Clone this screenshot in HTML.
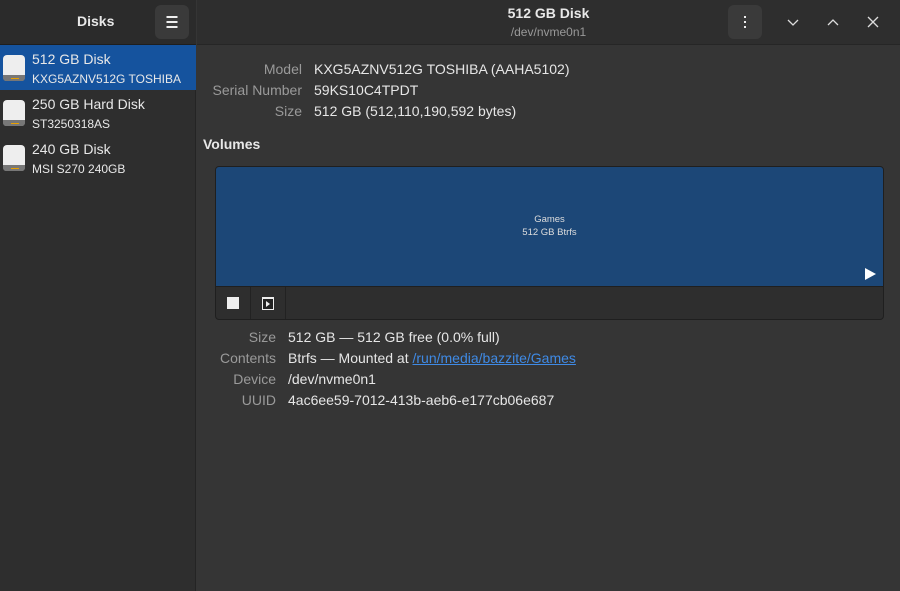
<!DOCTYPE html>
<html><head><style>
*{margin:0;padding:0;box-sizing:border-box}
body{width:900px;height:591px;overflow:hidden;background:#353535;font-family:"Liberation Sans","DejaVu Sans",sans-serif;color:#e8e8e8;position:relative}
.side{position:absolute;left:0;top:0;width:196px;height:591px;background:#2e2e2e;border-right:1px solid #242424}
.hdr{position:absolute;left:0;top:0;width:196px;height:45px;background:#2b2b2b;border-bottom:1px solid #1e1e1e}
.mhdr{position:absolute;left:197px;top:0;width:703px;height:45px;background:#2e2e2e;border-bottom:1px solid #262626}
.btn{position:absolute;width:34px;height:34px;border-radius:6px;background:#3a3a3a}
.item{position:absolute;left:0;width:196px;height:45px}
.item .t{position:absolute;left:32px;top:6px;font-size:14px}
.item .s{position:absolute;left:32px;top:27px;font-size:12px}
.ic{position:absolute;left:3px;top:10px;width:22px;height:26px;background:#eee;border-radius:4px}
.ic:after{content:"";position:absolute;left:0;bottom:0;width:22px;height:6px;background:#777;border-radius:0 0 3px 3px}
.ic:before{content:"";position:absolute;left:8px;bottom:2px;width:8px;height:1px;background:#e8a000;z-index:2}
.lbl{position:absolute;font-size:14px;color:#9a9a9a;text-align:right}
.val{position:absolute;font-size:14px;color:#e6e6e6}
</style></head><body>
<div class="side">
 <div class="item" style="top:45px;background:#15539e"><div class="ic"></div><div class="t">512 GB Disk</div><div class="s">KXG5AZNV512G TOSHIBA</div></div>
 <div class="item" style="top:90px"><div class="ic"></div><div class="t">250 GB Hard Disk</div><div class="s">ST3250318AS</div></div>
 <div class="item" style="top:135px"><div class="ic"></div><div class="t">240 GB Disk</div><div class="s">MSI S270 240GB</div></div>
</div>
<div class="hdr">
 <div style="position:absolute;left:77px;top:13px;font-weight:bold;font-size:14px">Disks</div>
 <div class="btn" style="left:155px;top:5px"><svg width="34" height="34"><path d="M11.5 12h11M11.5 17h11M11.5 22h11" stroke="#eee" stroke-width="2"/></svg></div>
</div>
<div class="mhdr">
 <div style="position:absolute;left:0;width:703px;top:5px;text-align:center;font-weight:bold;font-size:14px">512 GB Disk</div>
 <div style="position:absolute;left:0;width:703px;top:25px;text-align:center;font-size:12px;color:#999">/dev/nvme0n1</div>
 <div class="btn" style="left:531px;top:5px"><svg width="34" height="34"><path d="M17 11v2M17 16v2M17 21v2" stroke="#eee" stroke-width="2"/></svg></div>
 <svg style="position:absolute;left:584px;top:12px" width="24" height="20"><path d="M7 8l5 5 5-5" stroke="#ddd" fill="none" stroke-width="1.3"/></svg>
 <svg style="position:absolute;left:624px;top:12px" width="24" height="20"><path d="M7 13l5-5 5 5" stroke="#ddd" fill="none" stroke-width="1.3"/></svg>
 <svg style="position:absolute;left:664px;top:12px" width="24" height="20"><path d="M7 5l10 10M17 5L7 15" stroke="#ddd" fill="none" stroke-width="1.3"/></svg>
</div>
<div class="lbl" style="left:200px;width:102px;top:61px">Model</div>
<div class="lbl" style="left:200px;width:102px;top:82px">Serial Number</div>
<div class="lbl" style="left:200px;width:102px;top:103px">Size</div>
<div class="val" style="left:314px;top:61px">KXG5AZNV512G TOSHIBA (AAHA5102)</div>
<div class="val" style="left:314px;top:82px">59KS10C4TPDT</div>
<div class="val" style="left:314px;top:103px">512 GB (512,110,190,592 bytes)</div>
<div style="position:absolute;left:203px;top:136px;font-weight:bold;font-size:14px">Volumes</div>
<div style="position:absolute;left:215px;top:166px;width:669px;height:154px;border:1px solid #1f1f1f;border-radius:4px;background:#2e2e2e;overflow:hidden">
 <div style="position:absolute;left:0;top:0;width:667px;height:120px;background:#1c4777;border-bottom:1px solid #1f1f1f">
  <div style="position:absolute;left:0;width:667px;top:46px;text-align:center;font-size:9.5px;color:#ddd;line-height:13px">Games<br>512 GB Btrfs</div>
  <svg style="position:absolute;left:648px;top:100px" width="14" height="14"><path d="M1 1l11 6-11 6z" fill="#fff"/></svg>
 </div>
 <div style="position:absolute;left:0;top:120px;width:35px;height:32px;border-right:1px solid #222"><div style="position:absolute;left:11px;top:10px;width:12px;height:12px;background:#eee"></div></div>
 <div style="position:absolute;left:35px;top:120px;width:35px;height:32px;border-right:1px solid #222"><svg style="position:absolute;left:11px;top:10px" width="13" height="13"><rect x=".5" y=".5" width="11" height="12" fill="#222" stroke="#eee"/><rect x="0" y="0" width="12" height="2" fill="#eee"/><path d="M4 4l4 3-4 3z" fill="#eee"/></svg></div>
</div>
<div class="lbl" style="left:200px;width:76px;top:329px">Size</div>
<div class="lbl" style="left:200px;width:76px;top:350px">Contents</div>
<div class="lbl" style="left:200px;width:76px;top:371px">Device</div>
<div class="lbl" style="left:200px;width:76px;top:392px">UUID</div>
<div class="val" style="left:288px;top:329px">512 GB — 512 GB free (0.0% full)</div>
<div class="val" style="left:288px;top:350px">Btrfs — Mounted at <span style="color:#3f8ae5;text-decoration:underline">/run/media/bazzite/Games</span></div>
<div class="val" style="left:288px;top:371px">/dev/nvme0n1</div>
<div class="val" style="left:288px;top:392px">4ac6ee59-7012-413b-aeb6-e177cb06e687</div>
</body></html>
